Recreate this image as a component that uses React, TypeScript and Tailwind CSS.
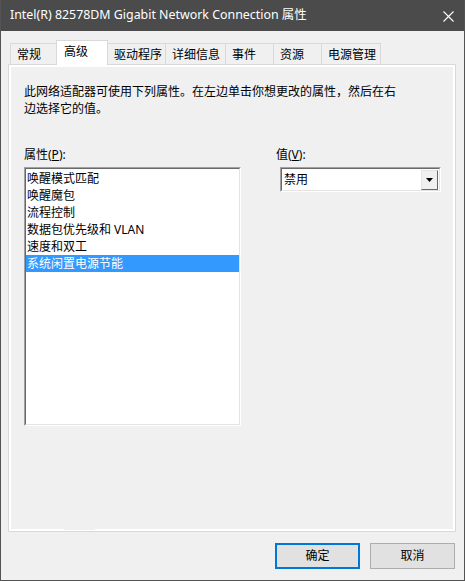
import React from 'react';

const font = { fontFamily: '"Noto Sans", "Noto Sans CJK SC", sans-serif' };

const tabs = [
  { id: 'general', label: '常规', width: 'w-[47px]' },
  { id: 'advanced', label: '高级', width: 'w-[52px]' },
  { id: 'driver', label: '驱动程序', width: 'w-[59px]' },
  { id: 'details', label: '详细信息', width: 'w-[61px]' },
  { id: 'events', label: '事件', width: 'w-[49px]' },
  { id: 'resources', label: '资源', width: 'w-[49px]' },
  { id: 'power', label: '电源管理', width: 'w-[60px]' },
];

const properties = [
  '唤醒模式匹配',
  '唤醒魔包',
  '流程控制',
  '数据包优先级和 VLAN',
  '速度和双工',
  '系统闲置电源节能',
];

function TitleBar() {
  return (
    <div className="flex h-[31px] items-center justify-between bg-[#4b4b4b] pl-[9px] pr-[10px] text-[12.4px] text-white">
      <span>Intel(R) 82578DM Gigabit Network Connection 属性</span>
      <svg width="11" height="11" viewBox="0 0 11 11" className="mt-px">
        <path d="M0.5 0.5 L10.5 10.5 M10.5 0.5 L0.5 10.5" stroke="#fff" strokeWidth="1.1" />
      </svg>
    </div>
  );
}

function TabStrip() {
  return (
    <div className="flex h-[25px] items-end pl-[2px]">
      {tabs.map((tab, i) => {
        const selected = tab.id === 'advanced';
        return (
          <div
            key={tab.id}
            className={
              selected
                ? `relative z-10 -ml-px h-[25px] ${tab.width} border-x border-t border-[#d9d9d9] bg-white pl-[7px] pt-[2px] text-[12px] leading-[18px]`
                : `${i > 0 ? '-ml-px' : ''} h-[22px] ${tab.width} border-x border-t border-[#d9d9d9] bg-[#f0f0f0] pl-[6px] pt-[2px] text-[12px] leading-[18px]`
            }
          >
            {tab.label}
          </div>
        );
      })}
    </div>
  );
}

function PropertyList() {
  return (
    <div className="mt-[4px] h-[259px] w-[217px] border border-b-white border-l-[#a0a0a0] border-r-white border-t-[#a0a0a0]">
      <div className="h-full w-full border border-b-[#e3e3e3] border-l-[#696969] border-r-[#e3e3e3] border-t-[#696969] bg-white pt-px">
        {properties.map((p, i) => (
          <div
            key={p}
            className={
              i === properties.length - 1
                ? 'h-[17px] bg-[#3399ff] pl-px text-[12px] leading-[17px] text-white'
                : 'h-[17px] pl-px text-[12px] leading-[17px] text-black'
            }
          >
            {p}
          </div>
        ))}
      </div>
    </div>
  );
}

function ValueCombo() {
  return (
    <div className="ml-[4px] mt-[4px] h-[25px] w-[161px] border border-b-white border-l-[#a0a0a0] border-r-white border-t-[#a0a0a0]">
      <div className="flex h-full w-full items-center border border-b-[#e3e3e3] border-l-[#696969] border-r-[#e3e3e3] border-t-[#696969] bg-white pr-px">
        <span className="flex-1 pl-[2px] text-[12px] leading-[17px]">禁用</span>
        <div className="flex h-[20px] w-[17px] items-center justify-center border border-b-[#696969] border-l-[#e3e3e3] border-r-[#696969] border-t-[#e3e3e3] bg-[#f0f0f0]">
          <svg width="7" height="4" viewBox="0 0 7 4">
            <path d="M0 0 H7 L3.5 4 Z" fill="#000" />
          </svg>
        </div>
      </div>
    </div>
  );
}

export default function App() {
  return (
    <div
      className="flex h-[581px] w-[465px] flex-col overflow-hidden border-x border-b border-[#535353] bg-[#f0f0f0] text-black"
      style={font}
    >
      <TitleBar />

      <div className="flex flex-1 flex-col pl-[7px] pr-[8px] pt-[9px]">
        <TabStrip />

        {/* Tab page */}
        <div className="relative -mt-px h-[468px] border border-[#d9d9d9]">
          <div className="h-full w-full border-2 border-white bg-[#f0f0f0] pl-[13px] pt-[16px]">
            <p className="text-[12px] leading-[17px]">
              此网络适配器可使用下列属性。在左边单击你想更改的属性，然后在右
              <br />
              边选择它的值。
            </p>

            <div className="mt-[29px] flex gap-[35px]">
              <div className="flex flex-col">
                <span className="text-[12px] leading-[17px]">
                  属性(<span className="underline">P</span>):
                </span>
                <PropertyList />
              </div>
              <div className="flex flex-col">
                <span className="text-[12px] leading-[17px]">
                  值(<span className="underline">V</span>):
                </span>
                <ValueCombo />
              </div>
            </div>
          </div>
          <span className="absolute bottom-px left-[55px] h-[2px] w-[31px] bg-[#f0f0f0]" />
        </div>

        {/* Dialog buttons */}
        <div className="mt-[11px] flex justify-end gap-[10px] pr-px">
          <button className="h-[26px] w-[85px] border-2 border-[#0078d7] bg-[#e1e1e1] text-[12px]">
            确定
          </button>
          <button className="h-[26px] w-[85px] border border-[#adadad] bg-[#e1e1e1] text-[12px]">
            取消
          </button>
        </div>
      </div>
    </div>
  );
}
